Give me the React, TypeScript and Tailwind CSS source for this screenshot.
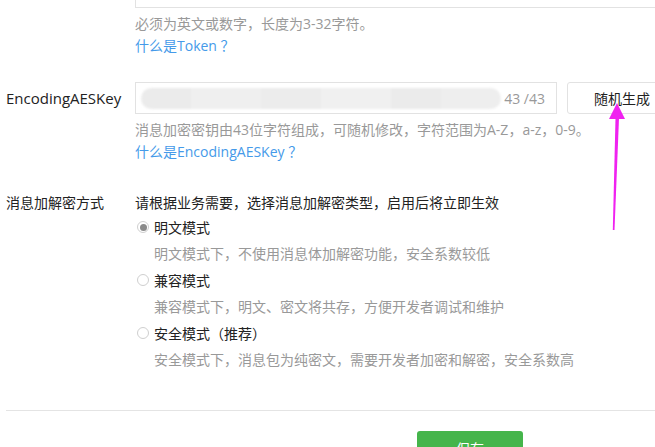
const font = { fontFamily: '"Open Sans", "Noto Sans CJK SC", sans-serif' };

const modes = [
  { title: "明文模式", desc: "明文模式下，不使用消息体加解密功能，安全系数较低", checked: true },
  { title: "兼容模式", desc: "兼容模式下，明文、密文将共存，方便开发者调试和维护", checked: false },
  { title: "安全模式（推荐）", desc: "安全模式下，消息包为纯密文，需要开发者加密和解密，安全系数高", checked: false },
];

function Radio({ checked }: { checked: boolean }) {
  return (
    <span className="w-[12px] h-[12px] shrink-0 rounded-full border border-[#cfcfcf] bg-white flex items-center justify-center mr-[5px] ml-[2px]">
      {checked && <span className="w-[7px] h-[7px] rounded-full bg-[#8a8a8a]" />}
    </span>
  );
}

export default function App() {
  return (
    <div
      className="relative w-[655px] h-[447px] overflow-hidden bg-white text-[14px] text-[#333] [text-spacing-trim:space-all]"
      style={font}
    >
      {/* token field (cut off at top) */}
      <div className="ml-[135px] h-[8px] border-l border-b border-[#e2e2e2]" />
      <div className="pl-[135px] mt-[5px] leading-[22px]">
        <div className="text-[#999]">必须为英文或数字，长度为3-32字符。</div>
        <div className="text-[#459ae9]">什么是Token ？</div>
      </div>

      {/* EncodingAESKey */}
      <div className="flex items-center mt-[25px] h-[32px]">
        <div className="w-[135px] shrink-0 pl-[6px] text-[15px] text-[#222]">EncodingAESKey</div>
        <div className="w-[422px] shrink-0 h-full border border-[#e2e2e2] flex items-center pl-[5px] pr-[11px]">
          <div className="flex w-[360px] h-[21px] rounded-full overflow-hidden blur-[1px]">
            <div className="w-[50px] bg-[#ebebeb]" />
            <div className="w-[70px] bg-[#efefef]" />
            <div className="w-[60px] bg-[#ececec]" />
            <div className="w-[70px] bg-[#f0f0f0]" />
            <div className="w-[50px] bg-[#ebebeb]" />
            <div className="flex-1 bg-[#eeeeee]" />
          </div>
          <span className="ml-auto whitespace-nowrap text-[#999]">43 /43</span>
        </div>
        <button className="ml-[10px] w-[110px] h-full shrink-0 border border-[#e2e2e2] rounded-[3px] bg-white text-[#222] text-[14px]">
          随机生成
        </button>
      </div>
      <div className="pl-[135px] mt-[5px] leading-[22px]">
        <div className="text-[#999]">消息加密密钥由43位字符组成，可随机修改，字符范围为A-Z，a-z，0-9。</div>
        <div className="text-[#459ae9]">什么是EncodingAESKey ？</div>
      </div>

      {/* mode */}
      <div className="flex mt-[29px]">
        <div className="w-[135px] shrink-0 pl-[6px] leading-[22px] text-[#222]">消息加解密方式</div>
        <div>
          <div className="leading-[22px] text-[#222]">请根据业务需要，选择消息加解密类型，启用后将立即生效</div>
          {modes.map((m) => (
            <div key={m.title}>
              <div className="h-[26.5px] flex items-center text-[#222]">
                <Radio checked={m.checked} />
                {m.title}
              </div>
              <div className="h-[26.5px] flex items-center pl-[19px] text-[#999]">{m.desc}</div>
            </div>
          ))}
        </div>
      </div>

      <div className="ml-[6px] mt-[37px] border-t border-[#e4e4e4]" />
      <div className="mt-[20px] pl-[417px]">
        <button className="w-[106px] h-[34px] rounded-[3px] bg-[#45b54b] text-white text-[14px]">保存</button>
      </div>

      {/* annotation arrow */}
      <svg className="absolute left-0 top-0 pointer-events-none" width="655" height="447">
        <polygon points="617,103 609,119 625,119" fill="#f022f0" />
        <polygon points="615.5,118 619,118 614.5,230 612.8,230" fill="#f022f0" />
      </svg>
    </div>
  );
}
